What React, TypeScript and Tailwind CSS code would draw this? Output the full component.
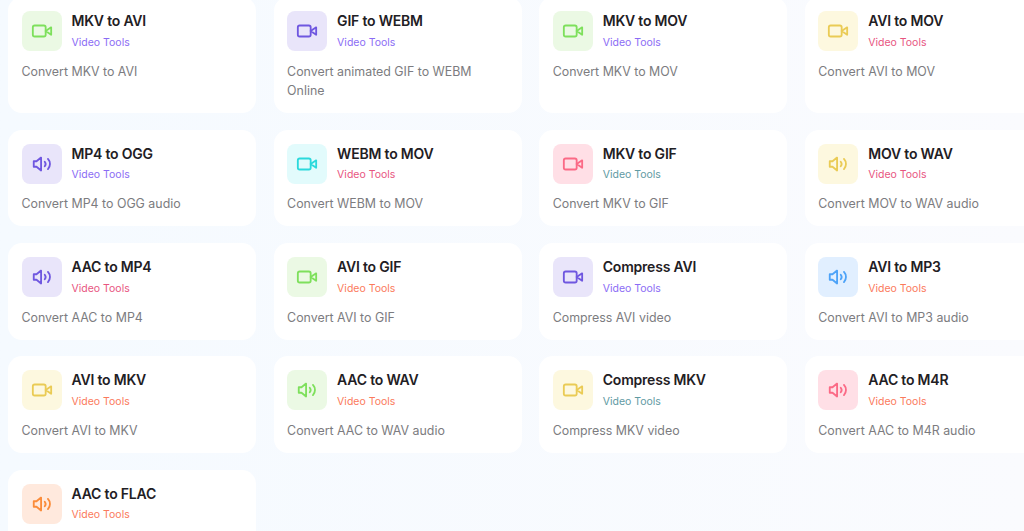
const tones = {
  green: { box: "bg-[#ebf9e4]", icon: "text-[#7ee05c]" },
  purple: { box: "bg-[#e9e5fa]", icon: "text-[#6f57e0]" },
  yellow: { box: "bg-[#fdf8df]", icon: "text-[#eacb55]" },
  cyan: { box: "bg-[#e2fbfc]", icon: "text-[#2bd9dc]" },
  pink: { box: "bg-[#ffdfe6]", icon: "text-[#fb6a86]" },
  blue: { box: "bg-[#e1efff]", icon: "text-[#4da3f8]" },
  orange: { box: "bg-[#ffe9dd]", icon: "text-[#fb8c3a]" },
};

const labels = {
  purple: "text-[#8b6cf5]",
  pink: "text-[#e8557f]",
  orange: "text-[#fb7a5c]",
  teal: "text-[#5f9aa3]",
};

type Tool = {
  title: string;
  desc: string;
  tone: keyof typeof tones;
  label: keyof typeof labels;
  audio?: boolean;
};

const tools: Tool[] = [
  { title: "MKV to AVI", desc: "Convert MKV to AVI", tone: "green", label: "purple" },
  { title: "GIF to WEBM", desc: "Convert animated GIF to WEBM Online", tone: "purple", label: "purple" },
  { title: "MKV to MOV", desc: "Convert MKV to MOV", tone: "green", label: "purple" },
  { title: "AVI to MOV", desc: "Convert AVI to MOV", tone: "yellow", label: "pink" },
  { title: "MP4 to OGG", desc: "Convert MP4 to OGG audio", tone: "purple", label: "purple", audio: true },
  { title: "WEBM to MOV", desc: "Convert WEBM to MOV", tone: "cyan", label: "pink" },
  { title: "MKV to GIF", desc: "Convert MKV to GIF", tone: "pink", label: "teal" },
  { title: "MOV to WAV", desc: "Convert MOV to WAV audio", tone: "yellow", label: "pink", audio: true },
  { title: "AAC to MP4", desc: "Convert AAC to MP4", tone: "purple", label: "pink", audio: true },
  { title: "AVI to GIF", desc: "Convert AVI to GIF", tone: "green", label: "orange" },
  { title: "Compress AVI", desc: "Compress AVI video", tone: "purple", label: "purple" },
  { title: "AVI to MP3", desc: "Convert AVI to MP3 audio", tone: "blue", label: "orange", audio: true },
  { title: "AVI to MKV", desc: "Convert AVI to MKV", tone: "yellow", label: "orange" },
  { title: "AAC to WAV", desc: "Convert AAC to WAV audio", tone: "green", label: "orange", audio: true },
  { title: "Compress MKV", desc: "Compress MKV video", tone: "yellow", label: "teal" },
  { title: "AAC to M4R", desc: "Convert AAC to M4R audio", tone: "pink", label: "orange", audio: true },
  { title: "AAC to FLAC", desc: "Convert AAC to FLAC", tone: "orange", label: "orange", audio: true },
];

function VideoIcon() {
  return (
    <svg width="22" height="22" viewBox="0 0 24 24" fill="none" stroke="currentColor" strokeWidth="2" strokeLinecap="round" strokeLinejoin="round">
      <path d="m22 8-6 4 6 4V8Z" />
      <rect x="2" y="6" width="14" height="12" rx="2" />
    </svg>
  );
}

function AudioIcon() {
  return (
    <svg width="22" height="22" viewBox="0 0 24 24" fill="none" stroke="currentColor" strokeWidth="2" strokeLinecap="round" strokeLinejoin="round">
      <path d="M11 5 6 9H3v6h3l5 4V5Z" />
      <path d="M15 9.5a4 4 0 0 1 0 5" />
      <path d="M18.5 6.5a8 8 0 0 1 0 11" />
    </svg>
  );
}

function ToolCard({ tool }: { tool: Tool }) {
  const tone = tones[tool.tone];
  return (
    <div className="rounded-[14px] bg-white px-[13.5px] pt-[14px] pb-[13px]">
      <div className="flex items-start">
        <div className={`flex h-10 w-10 shrink-0 items-center justify-center rounded-lg ${tone.box} ${tone.icon}`}>
          {tool.audio ? <AudioIcon /> : <VideoIcon />}
        </div>
        <div className="ml-[10px]">
          <h3 className="text-[14px] leading-[19px] font-semibold tracking-[-0.2px] text-[#1f2024]">{tool.title}</h3>
          <p className={`mt-[4.5px] text-[10.5px] leading-[16.5px] ${labels[tool.label]}`}>Video Tools</p>
        </div>
      </div>
      <p className="mt-[10.5px] text-[12.4px] leading-[19px] text-[#7c7c80]">{tool.desc}</p>
    </div>
  );
}

export default function App() {
  return (
    <div className="h-[531px] w-[1024px] overflow-hidden bg-gradient-to-r from-[#f5faff] to-[#fafbfe] font-['Inter',sans-serif]">
      <div className="ml-2 -mt-[2.6px] grid w-[1044px] grid-cols-[repeat(4,248px)] gap-x-[17.6px] gap-y-[16.8px]">
        {tools.map((tool) => (
          <ToolCard key={tool.title} tool={tool} />
        ))}
      </div>
    </div>
  );
}
